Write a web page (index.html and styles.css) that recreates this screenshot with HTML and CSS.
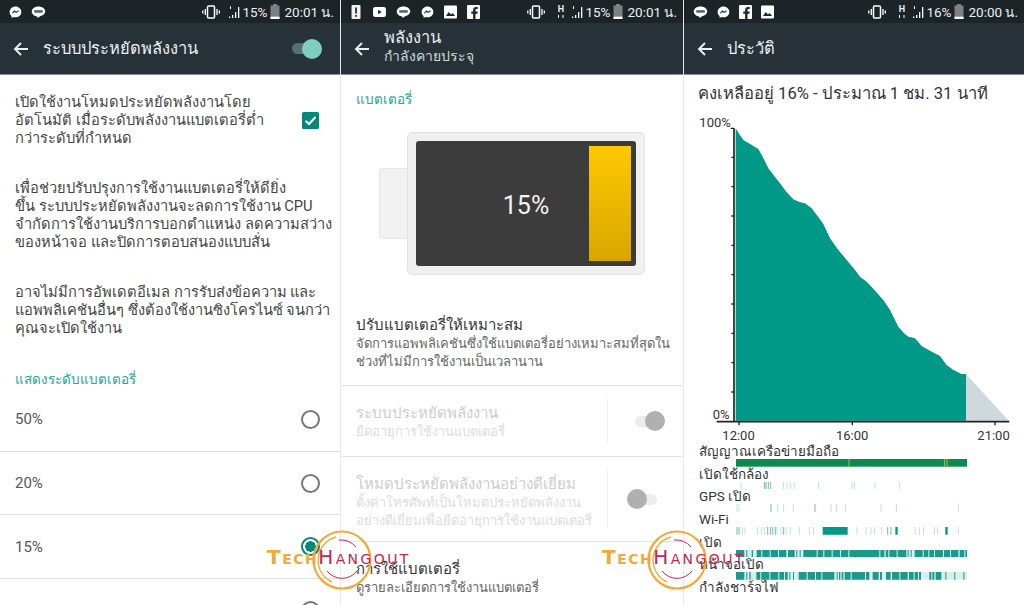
FILE: index.html
```html
<!DOCTYPE html>
<html lang="en">
<head>
    <meta charset="UTF-8">
    <title>Battery screens</title>
    <link rel="stylesheet" href="styles.css">
</head>
<body>
    <svg class="defs" width="0" height="0">
        <symbol id="i-msg" viewBox="0 0 14 14"><path fill="#fff" d="M7 1C3.400 1 .7 3.600.7 6.900c0 1.800.8 3.300 2.100 4.400V13.500l2.100-1.200c.7.200 1.400.3 2.100.3 3.600 0 6.300-2.500 6.300-5.700S10.600 1 7 1z"/><path fill="none" stroke="#1d262b" stroke-width="1.200" d="M3.700 8.300 6 6l1.700 1.400L10.300 5.600"/></symbol>
        <symbol id="i-line" viewBox="0 0 16 14"><path fill="#fff" d="M8 1C4 1 .8 3.400.8 6.400c0 2.700 2.500 4.900 5.900 5.300l.3 1.800 2.700-2c3.100-.6 5.500-2.700 5.500-5.100C15.200 3.400 12 1 8 1z"/><rect x="3.500" y="5" width="9" height="2.800" fill="#5d6468"/></symbol>
        <symbol id="i-vib" viewBox="0 0 18 14"><rect x="5.500" y="1" width="7" height="12" rx="1" fill="none" stroke="#fff" stroke-width="1.500"/><path stroke="#fff" stroke-width="1.300" d="M3.300 4v6M15 4v6M.8 5.500v3M17.300 5.500v3"/></symbol>
        <symbol id="i-sig" viewBox="0 0 12 14"><path fill="#fff" d="M4 10h1.300v3H4zM7 7h1.300v6H7zM10 2h1.300v11H10zM1 11.500h1.300V13H1z"/><path stroke="#fff" stroke-width="1" d="M2.500 1v3"/></symbol>
        <symbol id="i-bat" viewBox="0 0 10 15"><path fill="#7d8184" d="M3 0h4v1.500h2.500V15H.5V1.500H3z"/><rect x=".5" y="12.700" width="9" height="2.300" fill="#fff"/></symbol>
        <symbol id="i-excl" viewBox="0 0 10 14"><rect width="9" height="14" rx="1" fill="#f2f2f2"/><rect x="3.700" y="2.500" width="1.700" height="6" fill="#1d262b"/><rect x="3.700" y="10" width="1.700" height="1.800" fill="#1d262b"/></symbol>
        <symbol id="i-yt" viewBox="0 0 14 12"><rect width="14" height="11" y=".5" rx="2.500" fill="#fff"/><path fill="#1d262b" d="M5.500 3.500v5L9.500 6z"/></symbol>
        <symbol id="i-img" viewBox="0 0 13 13"><rect width="13" height="13" rx="1" fill="#fff"/><path fill="#1d262b" d="M2 10.500 4.800 6.500 7 9l1.500-1.600 2.700 3.100z"/></symbol>
        <symbol id="i-fb" viewBox="0 0 13 14"><rect width="13" height="14" rx="1" fill="#fff"/><path fill="#1d262b" d="M8.500 14V8.700h1.900l.3-2.200H8.500V5.200c0-.7.200-1.100 1.100-1.100h1.200v-2C10.500 2 9.800 2 9 2 7.300 2 6.100 3 6.100 4.900v1.600H4.300v2.200h1.800V14z"/></symbol>
        <symbol id="i-back" viewBox="0 0 16 16"><path fill="none" stroke="#eceff1" stroke-width="1.900" d="M15 8H2M8 2 2 8l6 6"/></symbol>
        <symbol id="i-ring" viewBox="0 0 60 60"><circle cx="30" cy="30" r="28.500" fill="none" stroke="#f2a93b" stroke-width="2.200"/><path fill="none" stroke="#f2a93b" stroke-width="1.400" d="M20 52A24 24 0 0 1 24 7"/><path fill="none" stroke="#c2274f" stroke-width="1" d="M15 41a19 19 0 0 0 30 0M27 10a20 20 0 0 1 17 7"/></symbol>
    </svg>

    <div class="screens">
        <!-- left: saver settings -->
        <section class="phone phone-a">
            <div class="status">
                <div class="status-left">
                    <svg class="ic"><use href="#i-msg"/></svg>
                    <svg class="ic wide"><use href="#i-line"/></svg>
                </div>
                <div class="status-right">
                    <svg class="ic vib"><use href="#i-vib"/></svg>
                    <svg class="ic sig"><use href="#i-sig"/></svg>
                    <span>15%</span>
                    <svg class="ic bat"><use href="#i-bat"/></svg>
                    <span class="clock">20:01 น.</span>
                </div>
            </div>
            <header class="appbar">
                <svg class="back"><use href="#i-back"/></svg>
                <h1 class="appbar-title">ระบบประหยัดพลังงาน</h1>
                <div class="switch switch-on"><i></i><b></b></div>
            </header>
            <main class="saver">
                <div class="auto-row">
                    <p class="para">เปิดใช้งานโหมดประหยัดพลังงานโดย<br>อัตโนมัติ เมื่อระดับพลังงานแบตเตอรี่ต่ำ<br>กว่าระดับที่กำหนด</p>
                    <svg class="check" viewBox="0 0 17 17"><rect width="17" height="17" rx="1.500" fill="#00897b"/><path fill="none" stroke="#fff" stroke-width="2" d="M3.500 8.800 7 12l6.500-7"/></svg>
                </div>
                <p class="para para-gap">เพื่อช่วยปรับปรุงการใช้งานแบตเตอรี่ให้ดียิ่ง<br>ขึ้น ระบบประหยัดพลังงานจะลดการใช้งาน CPU<br>จำกัดการใช้งานบริการบอกตำแหน่ง ลดความสว่าง<br>ของหน้าจอ และปิดการตอบสนองแบบสั่น</p>
                <p class="para para-gap">อาจไม่มีการอัพเดตอีเมล การรับส่งข้อความ และ<br>แอพพลิเคชันอื่นๆ ซึ่งต้องใช้งานซิงโครไนซ์ จนกว่า<br>คุณจะเปิดใช้งาน</p>
                <div class="section-label level-label">แสดงระดับแบตเตอรี่</div>
                <div class="level"><span>50%</span><span class="radio"></span></div>
                <div class="level"><span>20%</span><span class="radio"></span></div>
                <div class="level"><span>15%</span><span class="radio radio-on"></span></div>
                <div class="level"><span></span><span class="radio"></span></div>
            </main>
        </section>

        <!-- middle: power -->
        <section class="phone phone-b">
            <div class="status">
                <div class="status-left">
                    <svg class="ic"><use href="#i-excl"/></svg>
                    <svg class="ic"><use href="#i-yt"/></svg>
                    <svg class="ic wide"><use href="#i-line"/></svg>
                    <svg class="ic"><use href="#i-msg"/></svg>
                    <svg class="ic"><use href="#i-img"/></svg>
                    <svg class="ic"><use href="#i-fb"/></svg>
                </div>
                <div class="status-right">
                    <svg class="ic vib"><use href="#i-vib"/></svg>
                    <span class="net">H</span>
                    <svg class="ic sig"><use href="#i-sig"/></svg>
                    <span>15%</span>
                    <svg class="ic bat"><use href="#i-bat"/></svg>
                    <span class="clock">20:01 น.</span>
                </div>
            </div>
            <header class="appbar">
                <svg class="back"><use href="#i-back"/></svg>
                <div class="appbar-stack">
                    <h1 class="appbar-title">พลังงาน</h1>
                    <div class="appbar-sub">กำลังคายประจุ</div>
                </div>
            </header>
            <main class="power">
                <div class="section-label">แบตเตอรี่</div>
                <div class="battery">
                    <div class="battery-nub"></div>
                    <div class="battery-body">
                        <div class="battery-screen">15%<div class="battery-fill"></div></div>
                    </div>
                </div>
                <div class="item item-first">
                    <div class="item-title">ปรับแบตเตอรี่ให้เหมาะสม</div>
                    <div class="item-sub">จัดการแอพพลิเคชันซึ่งใช้แบตเตอรี่อย่างเหมาะสมที่สุดใน<br>ช่วงที่ไม่มีการใช้งานเป็นเวลานาน</div>
                </div>
                <div class="item item-off">
                    <div class="item-text">
                        <div class="item-title">ระบบประหยัดพลังงาน</div>
                        <div class="item-sub">ยืดอายุการใช้งานแบตเตอรี่</div>
                    </div>
                    <div class="item-side"><div class="switch switch-grey"><i></i><b></b></div></div>
                </div>
                <div class="item item-off item-tall">
                    <div class="item-text">
                        <div class="item-title">โหมดประหยัดพลังงานอย่างดีเยี่ยม</div>
                        <div class="item-sub">ตั้งค่าโทรศัพท์เป็นโหมดประหยัดพลังงาน<br>อย่างดีเยี่ยมเพื่อยืดอายุการใช้งานแบตเตอรี่</div>
                    </div>
                    <div class="item-side"><div class="switch switch-grey switch-left"><b></b><i></i></div></div>
                </div>
                <div class="item item-last">
                    <div class="item-title">การใช้แบตเตอรี่</div>
                    <div class="item-sub">ดูรายละเอียดการใช้งานแบตเตอรี่</div>
                </div>
            </main>
        </section>

        <!-- right: history -->
        <section class="phone phone-c">
            <div class="status">
                <div class="status-left">
                    <svg class="ic wide"><use href="#i-line"/></svg>
                    <svg class="ic"><use href="#i-msg"/></svg>
                    <svg class="ic"><use href="#i-fb"/></svg>
                    <svg class="ic"><use href="#i-img"/></svg>
                </div>
                <div class="status-right">
                    <svg class="ic vib"><use href="#i-vib"/></svg>
                    <span class="net">H</span>
                    <svg class="ic sig"><use href="#i-sig"/></svg>
                    <span>16%</span>
                    <svg class="ic bat"><use href="#i-bat"/></svg>
                    <span class="clock">20:00 น.</span>
                </div>
            </div>
            <header class="appbar">
                <svg class="back"><use href="#i-back"/></svg>
                <h1 class="appbar-title">ประวัติ</h1>
            </header>
            <main class="history">
                <h2 class="history-title">คงเหลืออยู่ 16% - ประมาณ 1 ชม. 31 นาที</h2>
                <svg class="chart" viewBox="0 12 1002 1008">
                    <path fill="#cfd8dc" d="M828 822 956 962H828z"/>
                    <path fill="#009886" d="M137 85 148 103 160 120 185 135 205 147 218 170 235 205 252 227 270 250 290 277 310 298 328 306 345 310 365 325 382 347 400 372 420 415 445 450 470 480 495 510 510 530 530 545 550 566 580 600 600 630 625 680 642 700 655 710 675 715 695 738 720 752 750 768 770 795 790 810 815 822H828V962H137z"/>
                    <path fill="none" stroke="#222" stroke-width="5" d="M132 85V965M80 965H958"/>
                    <path fill="none" stroke="#222" stroke-width="4" d="M122 85H132M124 172H132M124 260H132M124 348H132M124 436H132M124 524H132M124 612H132M124 700H132M124 788H132M124 876H132M147 965V976M487 965V976M915 965V976"/>
                    <g class="chart-text">
                        <text x="28" y="82">100%</text>
                        <text x="68" y="956">0%</text>
                        <text x="97" y="1020">12:00</text>
                        <text x="438" y="1020">16:00</text>
                        <text x="862" y="1020">21:00</text>
                    </g>
                </svg>
                <div class="track-label">สัญญาณเครือข่ายมือถือ</div>
                <svg class="track" viewBox="0 0 693 22" preserveAspectRatio="none">
                    <rect width="693" height="22" fill="#0b8a50"/>
                    <path fill="none" stroke="#a2c05a" stroke-width="3" d="M339 0v22M626 0v22M633 0v22"/>
                </svg>
                <div class="track-label">เปิดใช้กล้อง</div>
                <svg class="track" viewBox="0 0 693 22" preserveAspectRatio="none">
                    <path class="tick-pale" d="M15 0v22M142 0v22M153 0v22M163 0v22M175 0v22M248 0v22M348 0v22M355 0v22M417 0v22M491 0v22"/>
                    <path class="tick-mid" d="M85 0v22M90 0v22M97 0v22M104 0v22"/>
                </svg>
                <div class="track-label">GPS เปิด</div>
                <svg class="track" viewBox="0 0 693 22" preserveAspectRatio="none">
                    <path class="tick-pale" d="M3 0v22M9 0v22M125 0v22M143 0v22M172 0v22M285 0v22M301 0v22M329 0v22M435 0v22M481 0v22M667 0v22"/>
                    <path class="tick-mid" d="M105 0v22M237 0v22"/>
                </svg>
                <div class="track-label">Wi-Fi</div>
                <svg class="track" viewBox="0 0 693 22" preserveAspectRatio="none">
                    <path class="tick-pale" d="M20 0v22M27 0v22M65 0v22M77 0v22M85 0v22M123 0v22M135 0v22M150 0v22M163 0v22M190 0v22M220 0v22M233 0v22M363 0v22M390 0v22M405 0v22M415 0v22M437 0v22M537 0v22M550 0v22M563 0v22M595 0v22M605 0v22M667 0v22"/>
                    <path class="tick-mid" d="M3 0v22M9 0v22M95 0v22M103 0v22M110 0v22M118 0v22M143 0v22M455 0v22M465 0v22"/>
                    <path fill="#009886" d="M260 0h75v22h-75zM478 0h7v22h-7zM628 0h7v22h-7z"/>
                </svg>
                <div class="track-label">เปิด</div>
                <svg class="track" viewBox="0 0 693 22" preserveAspectRatio="none">
                    <rect width="693" height="22" fill="#d8efeb"/>
                    <line class="dash" x1="0" y1="11" x2="693" y2="11" stroke-dasharray="25 6 3 13 4 11 14 3 22 3 22 3 22 5 20 5 3 7 3 8 40 3 17 3 22 3 22 3 22 3 90 3 12 4 8 3 22 3 26 4 3 6 3 9 24 3 14 3 14 3 24 3 18 3 22 4 14 3 8 3 6"/>
                </svg>
                <div class="track-label">หน้าจอเปิด</div>
                <svg class="track" viewBox="0 0 693 22" preserveAspectRatio="none">
                    <rect width="693" height="22" fill="#d8efeb"/>
                    <line class="dash" x1="0" y1="11" x2="693" y2="11" stroke-dasharray="25 6 3 6 4 17 12 3 24 3 24 3 14 3 8 5 3 8 3 14 24 3 22 3 16 3 36 7 3 4 4 4 5 4 18 3 40 3 10 10 18 4 6 12 14 4 22 3 22 4 14 3 10 3 6"/>
                </svg>
                <div class="track-label">กำลังชาร์จไฟ</div>
            </main>
        </section>
    </div>

    <div class="logo logo-a">
        <svg class="logo-ring"><use href="#i-ring"/></svg>
        <div class="logo-text">Tech<span>Hangout</span></div>
    </div>
    <div class="logo logo-b">
        <svg class="logo-ring"><use href="#i-ring"/></svg>
        <div class="logo-text">Tech<span>Hangout</span></div>
    </div>
</body>
</html>
```

FILE: styles.css
```css
* {
    box-sizing: border-box;
}
html, body {
    margin: 0;
    height: 605px;
    overflow: hidden;
}
body {
    background: #e6e8e9;
    font-family: Roboto, "Noto Sans", sans-serif;
    color: #444;
    position: relative;
}
h1, h2, p {
    margin: 0;
    font-weight: normal;
}
.defs {
    position: absolute;
}
.screens {
    display: flex;
    gap: 1px;
    height: 605px;
}
.phone {
    background: #fff;
    height: 605px;
    overflow: hidden;
    flex: none;
}
.phone-a { width: 340px; }
.phone-b { width: 342px; }
.phone-c { width: 340px; }

/* status bar */
.status {
    height: 23px;
    background: #1c2428;
    color: #eceff1;
    font-size: 13.5px;
    display: flex;
    justify-content: space-between;
    align-items: center;
    padding: 0 6px 0 9px;
}
.status-left, .status-right {
    display: flex;
    align-items: center;
}
.status-left {
    gap: 9px;
}
.phone-b .status-left {
    gap: 10px;
}
.status-right {
    gap: 3px;
}
.ic {
    width: 13px;
    height: 14px;
}
.ic.wide { width: 15px; }
.ic.vib { width: 18px; margin-right: 5px; }
.ic.sig { width: 12px; margin-right: -1px; }
.ic.bat { width: 10px; height: 15px; }
.net {
    width: 9px;
    margin: 0 3px 0 3px;
    font-size: 9px;
    font-weight: 700;
    line-height: 9px;
    text-align: center;
}
.net::after {
    content: "";
    display: block;
    width: 1.500px;
    height: 3px;
    margin: 1px 0 0 1.500px;
    background: #fff;
    box-shadow: 4.500px 0 #fff;
}
.clock {
    margin-left: 1px;
}

/* app bar */
.appbar {
    height: 52px;
    background: #263238;
    border-bottom: 1px solid #8b9296;
    display: flex;
    align-items: center;
    color: #eceff1;
    padding-left: 13px;
}
.back {
    width: 16px;
    height: 16px;
    margin-right: 14px;
    flex: none;
}
.appbar-title {
    font-size: 16.5px;
    line-height: 20px;
}
.appbar-stack {
    margin-top: -6px;
}
.appbar-sub {
    font-size: 14px;
    line-height: 16px;
    color: #cfd8dc;
}
.phone-a .appbar .switch {
    margin-left: auto;
    margin-right: 18px;
}

/* toggles */
.switch {
    width: 30px;
    height: 20px;
    display: flex;
    align-items: center;
}
.switch i {
    display: block;
    width: 18px;
    height: 11px;
    border-radius: 6px 0 0 6px;
    background: #55706f;
}
.switch b {
    display: block;
    width: 20px;
    height: 20px;
    border-radius: 50%;
    background: #7fcdc1;
    margin-left: -8px;
}
.switch-grey {
    margin-left: 8px;
}
.switch-grey i {
    background: #ececec;
}
.switch-grey b {
    background: #b0b0b0;
}
.switch-left {
    margin: 0 8px 0 0;
}
.switch-left b {
    margin: 0 -8px 0 0;
    position: relative;
}
.switch-left i {
    border-radius: 0 6px 6px 0;
}

/* left screen */
.saver {
    padding: 18px 15px 0;
}
.auto-row {
    display: flex;
    align-items: center;
    justify-content: space-between;
    padding-right: 6px;
}
.para {
    font-size: 14.7px;
    line-height: 18px;
    color: #444;
    white-space: nowrap;
}
.para-gap {
    margin-top: 32px;
}
.check {
    width: 17px;
    height: 17px;
}
.section-label {
    color: #26a69a;
    font-size: 13.5px;
    line-height: 18px;
}
.level-label {
    margin-top: 33px;
}
.level {
    height: 63.700px;
    margin: 0 -15px;
    padding: 0 20px 0 15px;
    border-bottom: 1px solid #dfdfdf;
    display: flex;
    align-items: center;
    justify-content: space-between;
    font-size: 15px;
    color: #555;
}
.radio {
    width: 19px;
    height: 19px;
    border: 2px solid #777;
    border-radius: 50%;
}
.radio-on {
    border-color: #00897b;
    background: radial-gradient(circle, #00897b 0 5px, #fff 5.500px);
}

/* middle screen */
.power .section-label {
    padding: 15px 0 0 15px;
}
.battery {
    display: flex;
    align-items: center;
    margin: 24px 0 0 38px;
}
.battery-nub {
    width: 28px;
    height: 71px;
    background: #f2f2f2;
    border: 1px solid #e6e6e6;
    border-right: 0;
    border-radius: 4px 0 0 4px;
}
.battery-body {
    width: 238px;
    height: 143px;
    padding: 8px;
    background: #f0f0f0;
    border: 1px solid #e2e2e2;
    border-radius: 5px;
}
.battery-screen {
    height: 100%;
    background: #3c3c3c;
    border-radius: 3px;
    color: #f2f2f2;
    font-size: 25px;
    padding-top: 3px;
    display: flex;
    align-items: center;
    justify-content: center;
    position: relative;
}
.battery-fill {
    position: absolute;
    top: 5px;
    bottom: 5px;
    right: 5px;
    width: 42px;
    background: linear-gradient(#ffc800, #d9a600);
}
.item {
    padding: 17px 0 0 15px;
    border-bottom: 1px solid #e4e4e4;
}
.item-first {
    margin-top: 40px;
    padding-top: 0;
    padding-bottom: 15px;
}
.item-title {
    font-size: 15px;
    line-height: 20px;
    color: #333;
}
.item-sub {
    font-size: 13px;
    line-height: 17.500px;
    color: #666;
}
.item-off {
    display: flex;
    justify-content: space-between;
    padding: 0 0 0 15px;
    height: 71px;
}
.item-tall {
    height: 85px;
}
.item-off .item-text {
    padding-top: 17px;
}
.item-off .item-title {
    color: #ccc;
}
.item-off .item-sub {
    color: #ddd;
}
.item-side {
    width: 76px;
    margin: 13px 0;
    border-left: 1px solid #eee;
    display: flex;
    align-items: center;
    justify-content: center;
}
.item-last {
    border: 0;
}

/* right screen */
.history-title {
    font-size: 16.600px;
    line-height: 21px;
    padding: 8px 0 0 14px;
    color: #333;
    white-space: nowrap;
}
.chart {
    display: block;
    width: 334px;
    height: 336px;
    margin-left: 6px;
    overflow: visible;
}
.chart-text text {
    font-size: 39px;
    fill: #333;
}
.chart + .track-label {
    margin-top: 4px;
}
.track-label {
    font-size: 13.500px;
    line-height: 15px;
    height: 15px;
    margin-left: 15px;
    color: #333;
    white-space: nowrap;
}
.track {
    display: block;
    width: 231px;
    height: 7.700px;
    margin-left: 51.700px;
}
.tick-pale, .tick-mid {
    fill: none;
    stroke-width: 3;
}
.tick-pale { stroke: #bfe2dd; }
.tick-mid { stroke: #6dbdb2; }
.dash {
    stroke: #1b9a8b;
    stroke-width: 22;
}

/* watermark */
.logo {
    position: absolute;
    top: 530px;
    width: 150px;
    height: 60px;
    display: flex;
    align-items: center;
}
.logo-a { left: 267px; }
.logo-b { left: 602px; }
.logo-ring {
    position: absolute;
    left: 45px;
    top: 0;
    width: 60px;
    height: 60px;
}
.logo-text {
    position: relative;
    font-family: "DejaVu Sans", sans-serif;
    font-variant: small-caps;
    font-weight: 700;
    font-size: 20px;
    letter-spacing: 1.500px;
    color: #f2a93b;
    margin-top: -6px;
    white-space: nowrap;
}
.logo-text span {
    color: #c2274f;
    font-weight: 400;
    font-size: 20px;
    letter-spacing: 2.400px;
}
```
